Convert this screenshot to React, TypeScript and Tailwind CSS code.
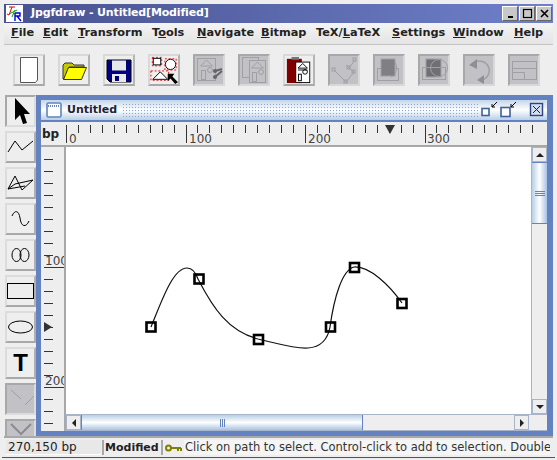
import type { ReactNode } from "react";

const menus = [
  { label: "File", u: 0, w: "w-[32px]" },
  { label: "Edit", u: 0, w: "w-[35px]" },
  { label: "Transform", u: 0, w: "w-[74px]" },
  { label: "Tools", u: 1, w: "w-[45px]" },
  { label: "Navigate", u: 0, w: "w-[64px]" },
  { label: "Bitmap", u: 0, w: "w-[55px]" },
  { label: "TeX/LaTeX", u: 4, w: "w-[76px]" },
  { label: "Settings", u: 0, w: "w-[61px]" },
  { label: "Window", u: 0, w: "w-[61px]" },
  { label: "Help", u: 0, w: "w-[36px]" },
];

const enabledBtn =
  "w-[32px] h-[32px] shrink-0 flex items-center justify-center bg-[#eeeeee] border-2 border-t-[#d8d8d8] border-l-[#d8d8d8] border-r-[#b4b4b4] border-b-[#a8a8a8]";
const disabledBtn =
  "w-[32px] h-[32px] shrink-0 flex items-center justify-center bg-[#c2c2c6] border-2 border-t-[#a8a8a8] border-l-[#a8a8a8] border-r-[#d8d8d8] border-b-[#d8d8d8]";

const G = "#a0a0a4";

const House = ({ x = 0, y = 0 }: { x?: number; y?: number }) => (
  <g transform={`translate(${x} ${y})`} fill="none" stroke={G}>
    <path d="M2.5 10 L8.5 4 L14.5 10 Z" />
    <rect x="3.5" y="14.5" width="4" height="9" />
    <circle cx="12" cy="14" r="2.5" />
  </g>
);

const toolbarIcons: { disabled?: boolean; icon: ReactNode }[] = [
  {
    icon: (
      <svg width="28" height="28" viewBox="0 0 28 28">
        <path d="M5.5 1.5 H22.5 V24 L20.5 26.5 H5.5 Z" fill="#fff" stroke="#555" />
      </svg>
    ),
  },
  {
    icon: (
      <svg width="28" height="28" viewBox="0 0 28 28">
        <path d="M3 23 V9 L5 7 H12 L14 9 H24 V11 H9 L4 23 Z" fill="#c8c800" stroke="#333" />
        <path d="M3.5 23.5 L8.5 11.5 H26.5 L21.5 23.5 Z" fill="#ffff00" stroke="#333" />
      </svg>
    ),
  },
  {
    icon: (
      <svg width="28" height="28" viewBox="0 0 28 28">
        <path d="M2 4 H26 V26 H5 L2 23 Z" fill="#000080" stroke="#000" />
        <rect x="7" y="4.5" width="14" height="10" fill="#e8e8e8" />
        <rect x="7" y="18" width="14" height="8" fill="#e8e8e8" />
        <rect x="10" y="20" width="4" height="5" fill="#000080" />
      </svg>
    ),
  },
  {
    icon: (
      <svg width="30" height="30" viewBox="0 0 30 30">
        <rect x="3.5" y="2.5" width="8" height="7" fill="#fff" stroke="#000" />
        <rect x="2.5" y="1.5" width="10" height="9" fill="none" stroke="#e00000" strokeDasharray="2 2" />
        <circle cx="22" cy="9" r="5.5" fill="#fff" stroke="#000" />
        <rect x="16" y="3" width="12" height="12" fill="none" stroke="#e00000" strokeDasharray="2 2" />
        <path d="M3 25 L11 17 L19 25 Z" fill="#fff" stroke="#000" />
        <rect x="1" y="16" width="19" height="10" fill="none" stroke="#e00000" strokeDasharray="2 2" />
        <path d="M19 19 H26 L24 22 L30 28 L27 30 L22 24 L19 27 Z" fill="#000" />
      </svg>
    ),
  },
  {
    disabled: true,
    icon: (
      <svg width="28" height="28" viewBox="0 0 28 28">
        <rect x="2.5" y="2.5" width="18" height="22" fill="none" stroke={G} />
        <House x={3} y={0} />
        <circle cx="20" cy="15" r="2" fill="#666" />
        <circle cx="20" cy="21" r="2" fill="#666" />
        <path d="M20 15 L27 13 M20 21 L27 15" stroke="#666" strokeWidth="2" />
      </svg>
    ),
  },
  {
    disabled: true,
    icon: (
      <svg width="28" height="28" viewBox="0 0 28 28">
        <rect x="2.5" y="1.5" width="16" height="20" fill="none" stroke={G} />
        <rect x="9.5" y="4.5" width="16" height="22" fill="#c2c2c6" stroke={G} />
        <House x={9} y={2} />
      </svg>
    ),
  },
  {
    icon: (
      <svg width="30" height="30" viewBox="0 0 30 30">
        <rect x="2" y="3" width="16" height="26" fill="#800000" />
        <rect x="7" y="1" width="8" height="3" fill="#777" />
        <rect x="11.5" y="6.5" width="15" height="22" fill="#fff" stroke="#000" />
        <path d="M14 13 L19 8 L24 13 Z M14 15 H24" fill="none" stroke="#000" />
        <rect x="14.5" y="19.5" width="3" height="7" fill="none" stroke="#000" />
        <circle cx="21.5" cy="17" r="2.5" fill="none" stroke="#000" />
      </svg>
    ),
  },
  {
    disabled: true,
    icon: (
      <svg width="28" height="28" viewBox="0 0 28 28" fill="none" stroke={G}>
        <path d="M4 14 L16 26 L24 16 L19 12 L25 4 M19 12 L16 9" />
        <rect x="2" y="12" width="3" height="3" />
        <rect x="14" y="24" width="3" height="3" />
        <rect x="22" y="14" width="3" height="3" />
        <rect x="17" y="10" width="3" height="3" />
        <rect x="23" y="2" width="3" height="3" />
      </svg>
    ),
  },
  {
    disabled: true,
    icon: (
      <svg width="28" height="28" viewBox="0 0 28 28" fill="none" stroke={G}>
        <rect x="2.5" y="12.5" width="21" height="12" />
        <path d="M16 3 A10 10 0 0 1 16 21" />
        <rect x="6" y="3" width="14" height="17" fill="#808084" />
      </svg>
    ),
  },
  {
    disabled: true,
    icon: (
      <svg width="28" height="28" viewBox="0 0 28 28" fill="none" stroke={G}>
        <rect x="6" y="3" width="15" height="18" fill="#707074" />
        <circle cx="19" cy="12" r="8.5" />
        <rect x="2.5" y="11.5" width="23" height="12" />
      </svg>
    ),
  },
  {
    disabled: true,
    icon: (
      <svg width="28" height="28" viewBox="0 0 28 28" fill="none">
        <path d="M9 7 A9.5 9.5 0 1 1 16 24" stroke={G} strokeWidth="1.5" />
        <path d="M12 3 V13 L4 9 Z M19 19 V28 L12 24 Z" fill="#909094" />
      </svg>
    ),
  },
  {
    disabled: true,
    icon: (
      <svg width="28" height="28" viewBox="0 0 28 28" fill="none" stroke={G}>
        <rect x="2.5" y="5.5" width="24" height="18" />
        <path d="M2.5 12.5 H26.5 M2.5 16.5 H14.5 V23.5" />
      </svg>
    ),
  },
];

const sideIcons: ReactNode[] = [
  <svg key="a" width="22" height="28" viewBox="0 0 22 28">
    <path d="M5 1 L20 17 H14 L17 26 L13 27 L10 18 L5 23 Z" fill="#000" />
  </svg>,
  <svg key="b" width="27" height="24" viewBox="0 0 27 24" fill="none" stroke="#000">
    <path d="M1 17 L8 6 L15 15 L26 6" />
  </svg>,
  <svg key="c" width="27" height="24" viewBox="0 0 27 24" fill="none" stroke="#000">
    <path d="M1 18 L8 5 L15 19 L26 9 L8 13 L1 18 L18 15" />
  </svg>,
  <svg key="d" width="27" height="24" viewBox="0 0 27 24" fill="none" stroke="#000">
    <path d="M5 9 C 8 2, 12 4, 13 11 C 14 20, 19 21, 22 14" />
  </svg>,
  <svg key="e" width="27" height="24" viewBox="0 0 27 24" fill="none" stroke="#000">
    <ellipse cx="9.5" cy="12" rx="4.5" ry="6.5" />
    <ellipse cx="17.5" cy="12" rx="4.5" ry="6.5" />
  </svg>,
  <svg key="f" width="27" height="20" viewBox="0 0 27 20">
    <rect x="0.5" y="2.5" width="26" height="15" fill="#eeeeee" stroke="#000" />
  </svg>,
  <svg key="g" width="27" height="20" viewBox="0 0 27 20">
    <ellipse cx="13.5" cy="10" rx="12" ry="6" fill="#eeeeee" stroke="#000" />
  </svg>,
  <span key="h" className="font-bold text-[24px] leading-none text-black" style={{ fontFamily: "'Liberation Sans', sans-serif" }}>
    T
  </span>,
];

const topTicks = Array.from({ length: 40 }, (_, i) => i);
const leftTicks = Array.from({ length: 23 }, (_, i) => i);

const TopRuler = () => (
  <svg width="481" height="25" className="block">
    {topTicks.map((i) => {
      const x = Math.round(i * 11.95) + 0.5;
      const major = i % 10 === 0;
      return <line key={i} x1={x} x2={x} y1={3} y2={major ? 21 : 11} stroke="#333" />;
    })}
    <text x="3" y="21" fontSize="12" fill="#444" fontFamily="'DejaVu Sans', sans-serif">0</text>
    <text x="123" y="21" fontSize="12" fill="#444" fontFamily="'DejaVu Sans', sans-serif">100</text>
    <text x="242" y="21" fontSize="12" fill="#444" fontFamily="'DejaVu Sans', sans-serif">200</text>
    <text x="361" y="21" fontSize="12" fill="#444" fontFamily="'DejaVu Sans', sans-serif">300</text>
    <path d="M319 3 H329 L324 12 Z" fill="#333" />
  </svg>
);

const LeftRuler = () => (
  <svg width="23" height="284" className="block">
    {leftTicks.map((i) => {
      const y = 12.5 + i * 12;
      const major = i === 9 || i === 19;
      return <line key={i} x1={2} x2={major ? 23 : 11} y1={y} y2={y} stroke="#333" />;
    })}
    <text x="3" y="118" fontSize="12" fill="#444" fontFamily="'DejaVu Sans', sans-serif">100</text>
    <text x="3" y="238" fontSize="12" fill="#444" fontFamily="'DejaVu Sans', sans-serif">200</text>
    <path d="M2 175 V185 L10 180 Z" fill="#333" />
  </svg>
);

const handles = [
  [151, 327],
  [199, 279],
  [258.5, 339.5],
  [330.5, 327],
  [354.5, 267.5],
  [402, 303.5],
];

const ScrollArrow = ({ d }: { d: string }) => (
  <svg width="10" height="10" viewBox="0 0 10 10">
    <path d={d} fill="#222" />
  </svg>
);

const scrollBtn = "shrink-0 flex items-center justify-center bg-[#eeeeee] border border-[#a8b4cc]";

export default function App() {
  return (
    <div
      className="w-[557px] h-[460px] overflow-hidden bg-[#eeeeee] flex flex-col text-[12px] text-[#222]"
      style={{ fontFamily: "'DejaVu Sans', sans-serif" }}
    >
      <div className="ml-[4px] w-[549px] mt-[4px] flex flex-col">
        {/* title bar */}
        <div className="h-[19px] flex items-center bg-gradient-to-r from-[#47528f] to-[#6f80cb] text-white font-bold text-[11px]">
          <svg width="17" height="17" viewBox="0 0 17 17" className="ml-[2px]">
            <rect width="17" height="17" fill="#fff" />
            <path d="M3 2 H9 M6 2 L3 10 L1 9" stroke="#e00000" fill="none" />
            <path d="M3 9 L11 5 M6 12 L9 5" stroke="#00a000" fill="none" />
            <path d="M9 8 V16 M9 8 H14 L14 11 H9 M11 11 L15 16" stroke="#0000e0" fill="none" strokeWidth="1.4" />
          </svg>
          <span className="ml-[8px] tracking-[-0.15px]">Jpgfdraw - Untitled[Modified]</span>
          <div className="ml-auto mr-[1px] flex gap-[1px]">
            {[
              <path key="m" d="M4 10 H9" stroke="#000" strokeWidth="2" />,
              <rect key="x" x="2.5" y="2.5" width="8" height="8" fill="none" stroke="#000" strokeWidth="1.2" />,
              <path key="c" d="M3 3 L10 10 M10 3 L3 10" stroke="#000" strokeWidth="1.6" />,
            ].map((g, i) => (
              <div key={i} className="w-[16px] h-[15px] bg-[#c8c8c8] border border-t-white border-l-white border-r-[#666] border-b-[#666] flex items-center justify-center">
                <svg width="13" height="13" viewBox="0 0 13 13">{g}</svg>
              </div>
            ))}
          </div>
        </div>

        {/* menu bar */}
        <div className="h-[22px] pl-[7px] flex items-center font-bold text-[11.3px] border-b border-[#c4c4c4] bg-gradient-to-b from-[#f4f4f4] to-[#e4e4e4]">
          {menus.map((m) => (
            <span key={m.label} className={`${m.w} shrink-0 whitespace-pre`}>
              {m.label.slice(0, m.u)}
              <span className="underline">{m.label[m.u]}</span>
              {m.label.slice(m.u + 1)}
            </span>
          ))}
        </div>

        {/* tool bar */}
        <div className="h-[50px] pl-[9px] flex items-center gap-[13px] pb-[1px]">
          {toolbarIcons.map((b, i) => (
            <div key={i} className={b.disabled ? disabledBtn : enabledBtn}>
              {b.icon}
            </div>
          ))}
        </div>

        {/* main area */}
        <div className="h-[341px] flex">
          <div className="w-[32px] shrink-0 h-[341px] overflow-hidden flex flex-col gap-[4px] pl-[1px]">
            {sideIcons.map((icon, i) => (
              <div
                key={i}
                className={`w-[31px] h-[32px] shrink-0 flex items-center justify-center bg-[#eeeeee] border-2 ${
                  i === 0
                    ? "border-t-[#a8a8a8] border-l-[#a8a8a8] border-r-[#dcdcdc] border-b-[#dcdcdc]"
                    : "border-t-[#dcdcdc] border-l-[#dcdcdc] border-r-[#b0b0b0] border-b-[#a8a8a8]"
                }`}
              >
                {icon}
              </div>
            ))}
            <div className="w-[31px] h-[32px] shrink-0 flex items-center justify-center bg-[#c2c2c6] border-2 border-t-[#a8a8a8] border-l-[#a8a8a8] border-r-[#dcdcdc] border-b-[#dcdcdc]">
              <svg width="26" height="24" viewBox="0 0 26 24" fill="none" stroke={G}>
                <path d="M3 3 L13 12 M17 18 L27 8" />
              </svg>
            </div>
            <div className="w-[31px] h-[32px] shrink-0 flex items-start justify-center bg-[#c2c2c6] border-2 border-t-[#a8a8a8] border-l-[#a8a8a8] border-r-[#dcdcdc] border-b-[#dcdcdc]">
              <svg width="26" height="16" viewBox="0 0 26 16" fill="none" stroke="#8c8c90" strokeWidth="2">
                <path d="M3 3 L13 13 L23 3" />
              </svg>
            </div>
          </div>

          {/* desktop */}
          <div className="flex-1 bg-[#6382bf] pl-[5px] pt-[5px] pr-[6px] pb-[5px]">
            <div className="w-[506px] h-[331px] bg-[#eeeeee] flex flex-col">
              <div className="h-[22px] shrink-0 flex items-center rounded-tr-[3px] border-b-2 border-[#6382bf] bg-gradient-to-b from-[#c4d6ea] via-white to-[#b8cfe5]">
                <svg width="16" height="16" viewBox="0 0 16 16" className="ml-[5px]">
                  <rect x="1" y="1" width="14" height="14" rx="1.5" fill="#fff" stroke="#6382bf" strokeWidth="1.6" />
                  <path d="M2 4 H14" stroke="#6382bf" strokeWidth="2" strokeDasharray="1 1" />
                </svg>
                <span className="ml-[5px] w-[55px] shrink-0 font-bold text-[11px] text-[#22223a]">Untitled</span>
                <div className="h-[14px] w-[356px] bg-[radial-gradient(#8aa4d4_0.9px,transparent_1px)] bg-[length:3px_3px]" />
                <svg width="68" height="18" viewBox="0 0 68 18" className="ml-[1px]">
                  <rect x="3" y="7.5" width="7" height="7" fill="#fff" stroke="#3f5f9f" strokeWidth="1.6" />
                  <path d="M18 1 L13 6 M13 3 V6 H16" stroke="#000" fill="none" />
                  <rect x="22" y="6.5" width="9" height="9" fill="#fff" stroke="#3f5f9f" strokeWidth="1.6" />
                  <path d="M37 1 L32 6 M32 3 V6 H35" stroke="#000" fill="none" />
                  <rect x="51.5" y="2.5" width="12" height="12" fill="#d4e0f0" stroke="#2c4480" strokeWidth="1.4" />
                  <path d="M54 5 L61 12 M61 5 L54 12" stroke="#222" />
                </svg>
              </div>

              {/* top ruler */}
              <div className="h-[25px] shrink-0 flex border-b-2 border-[#a8a8a8]">
                <div className="w-[25px] shrink-0 pl-[1px] pt-[3px] font-bold text-[#222]">bp</div>
                <TopRuler />
              </div>

              <div className="flex-1 flex min-h-0">
                <div className="w-[25px] shrink-0 border-r-2 border-[#a8a8a8] pl-[1px] overflow-hidden">
                  <LeftRuler />
                </div>
                <div className="flex-1 flex flex-col min-w-0">
                  <div className="h-[267px] flex shrink-0">
                    <div className="w-[465px] h-[267px] bg-white relative overflow-hidden shrink-0">
                      <svg width="465" height="267" viewBox="66 147 465 267" className="block">
                        <path
                          d="M151 327 C 162 300, 173 268, 187 268 C 192 268, 196 273, 198 279 C 213 308, 228 331, 258 339 C 280 344, 295 349, 308 348 C 322 347, 328 338, 330 327 C 334 298, 342 270, 354 267 C 370 266, 390 286, 402 303"
                          fill="none"
                          stroke="#111"
                          strokeWidth="1.2"
                        />
                        {handles.map(([x, y]) => (
                          <rect key={x} x={x - 4.5} y={y - 4.5} width="9" height="9" fill="none" stroke="#000" strokeWidth="2.6" />
                        ))}
                      </svg>
                    </div>
                    <div className="w-[16px] shrink-0 flex flex-col border-l border-[#a8b4cc]">
                      <div className={`${scrollBtn} h-[15px]`}>
                        <ScrollArrow d="M1 7 H9 L5 3 Z" />
                      </div>
                      <div className="h-[62px] shrink-0 flex flex-col items-center justify-center gap-[1px] border-y border-[#6382bf] bg-gradient-to-r from-[#b8cfe5] via-white to-[#a9c3e2]">
                        <div className="w-[10px] h-px bg-[#6382bf]" />
                        <div className="w-[10px] h-px bg-[#6382bf]" />
                        <div className="w-[10px] h-px bg-[#6382bf]" />
                      </div>
                      <div className="flex-1" />
                      <div className={`${scrollBtn} h-[15px]`}>
                        <ScrollArrow d="M1 3 H9 L5 7 Z" />
                      </div>
                    </div>
                  </div>
                  <div className="h-[17px] flex shrink-0 border-y border-[#a8b4cc]">
                    <div className={`${scrollBtn} w-[15px]`}>
                      <ScrollArrow d="M7 1 V9 L3 5 Z" />
                    </div>
                    <div className="w-[282px] shrink-0 flex items-center justify-center gap-[1px] border-x border-[#6382bf] bg-gradient-to-b from-[#b8cfe5] via-white to-[#a9c3e2]">
                      <div className="w-px h-[8px] bg-[#6382bf]" />
                      <div className="w-px h-[8px] bg-[#6382bf]" />
                      <div className="w-px h-[8px] bg-[#6382bf]" />
                    </div>
                    <div className="w-[151px] shrink-0" />
                    <div className={`${scrollBtn} w-[15px]`}>
                      <ScrollArrow d="M3 1 V9 L7 5 Z" />
                    </div>
                    <div className="flex-1" />
                  </div>
                </div>
              </div>
            </div>
          </div>
        </div>

        {/* status bar */}
        <div className="h-[21px] pl-[2px] pt-[2px] flex items-stretch gap-[1px] border-t-2 border-[#a8a8a8] leading-[15px] whitespace-nowrap">
          <div className="w-[95px] h-[15px] shrink-0 pl-[2px] bg-[#e8e8e8] border-b border-white">270,150 bp</div>
          <div className="w-[58px] h-[15px] shrink-0 pl-[1px] font-bold text-[11px] border-l-2 border-[#a8a8a8]">Modified</div>
          <div className="w-[22px] h-[15px] shrink-0 flex items-center justify-center border-l-2 border-[#a8a8a8]">
            <svg width="17" height="8" viewBox="0 0 17 8" fill="none" stroke="#808000" strokeWidth="2">
              <circle cx="3.5" cy="4" r="2.5" />
              <path d="M6 4 H16 M13 4 V7 M16 4 V7" />
            </svg>
          </div>
          <div className="w-[366px] h-[15px] shrink-0 overflow-hidden pl-[1px] text-[11.5px] text-[#333] bg-white/40">
            Click on path to select. Control-click to add to selection. Double
          </div>
        </div>
      </div>
      <div className="ml-[2px] mr-[2px] h-px bg-[#555]" />
    </div>
  );
}
